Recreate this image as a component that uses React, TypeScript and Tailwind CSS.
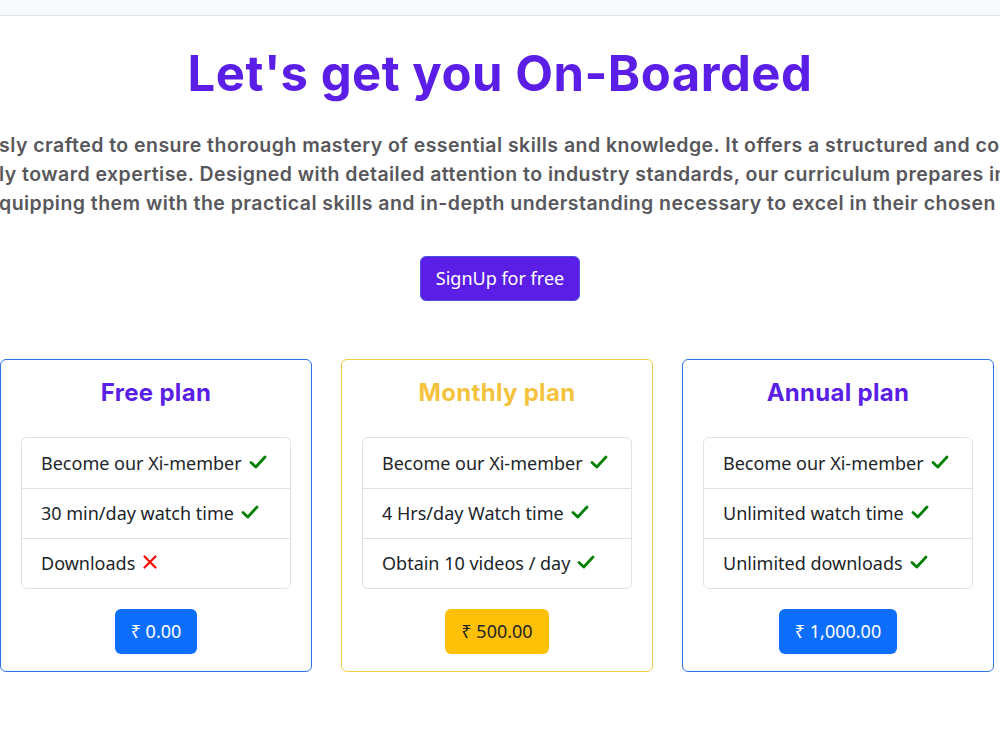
import React from "react";

type Feature = { label: string; ok: boolean };
type Plan = {
  name: string;
  price: string;
  titleColor: string;
  border: string;
  button: string;
  features: Feature[];
};

const plans: Plan[] = [
  {
    name: "Free plan",
    price: "₹ 0.00",
    titleColor: "text-[#5b1ee6]",
    border: "border-[#2f74e6]",
    button: "bg-[#0d6efd] text-white",
    features: [
      { label: "Become our Xi-member", ok: true },
      { label: "30 min/day watch time", ok: true },
      { label: "Downloads", ok: false },
    ],
  },
  {
    name: "Monthly plan",
    price: "₹ 500.00",
    titleColor: "text-[#f5c23e]",
    border: "border-[#f3cc4a]",
    button: "bg-[#ffc107] text-[#212529]",
    features: [
      { label: "Become our Xi-member", ok: true },
      { label: "4 Hrs/day Watch time", ok: true },
      { label: "Obtain 10 videos / day", ok: true },
    ],
  },
  {
    name: "Annual plan",
    price: "₹ 1,000.00",
    titleColor: "text-[#5b1ee6]",
    border: "border-[#2f74e6]",
    button: "bg-[#0d6efd] text-white",
    features: [
      { label: "Become our Xi-member", ok: true },
      { label: "Unlimited watch time", ok: true },
      { label: "Unlimited downloads", ok: true },
    ],
  },
];

function Tick() {
  return (
    <svg width="18" height="16" viewBox="0 0 18 16" className="inline-block ml-[7px] -mt-[3px]">
      <path d="M2 8.5 L6.8 13 L16 3" fill="none" stroke="#008000" strokeWidth="2.8" strokeLinecap="round" strokeLinejoin="round" />
    </svg>
  );
}

function Cross() {
  return (
    <svg width="16" height="16" viewBox="0 0 16 16" className="inline-block ml-[7px] -mt-[3px]">
      <path d="M2.5 2.5 L13.5 13.5 M13.5 2.5 L2.5 13.5" fill="none" stroke="#ff0000" strokeWidth="2.2" strokeLinecap="round" />
    </svg>
  );
}

function PlanCard({ plan }: { plan: Plan }) {
  return (
    <div className={`w-[312px] shrink-0 h-[313px] border ${plan.border} rounded-[6px] bg-white flex flex-col items-center px-[20px]`}>
      <h3
        className={`mt-[15px] h-[36px] leading-[36px] text-[24px] font-bold tracking-[0.3px] ${plan.titleColor}`}
        style={{ fontFamily: "Inter, 'Noto Sans', sans-serif" }}
      >
        {plan.name}
      </h3>
      <ul className="mt-[26px] w-full border border-[#dee2e6] rounded-[6px]">
        {plan.features.map((f, i) => (
          <li
            key={f.label}
            className={`h-[50px] flex items-center pl-[19px] text-[18px] text-[#212529] ${i > 0 ? "border-t border-[#dee2e6]" : ""}`}
          >
            <span>{f.label}</span>
            {f.ok ? <Tick /> : <Cross />}
          </li>
        ))}
      </ul>
      <button className={`mt-[20px] h-[45px] px-[16px] rounded-[6px] text-[18px] ${plan.button}`}>
        {plan.price}
      </button>
    </div>
  );
}

export default function App() {
  return (
    <div
      className="w-[1000px] h-[750px] overflow-hidden bg-white"
      style={{ fontFamily: "'Noto Sans', 'Open Sans', sans-serif" }}
    >
      <div className="h-[16px] bg-[#f8f9fa] border-b border-[#dee2e6]" />

      <h1
        className="mt-[28px] text-center text-[49px] leading-[60px] font-bold text-[#5b1ee6] tracking-[0.5px]"
        style={{ fontFamily: "Inter, 'Noto Sans', sans-serif" }}
      >
        Let's get you On-Boarded
      </h1>

      <div
        className="mt-[27px] text-[19.5px] leading-[29px] font-semibold text-[#58575c] whitespace-nowrap tracking-[0.46px]"
        style={{ fontFamily: "Inter, 'Noto Sans', sans-serif" }}
      >
        <p className="-ml-[1px]">sly crafted to ensure thorough mastery of essential skills and knowledge. It offers a structured and comprehensive</p>
        <p className="-ml-[1px]">ly toward expertise. Designed with detailed attention to industry standards, our curriculum prepares individuals</p>
        <p className="-ml-[1px]">quipping them with the practical skills and in-depth understanding necessary to excel in their chosen field.</p>
      </div>

      <div className="mt-[38px] flex justify-center">
        <button className="h-[45px] w-[160px] rounded-[6px] bg-[#5b1ee6] border border-[#4a4fe0] text-white text-[18px]">
          SignUp for free
        </button>
      </div>

      <div className="mt-[58px] flex gap-[29px]">
        {plans.map((p) => (
          <PlanCard key={p.name} plan={p} />
        ))}
      </div>
    </div>
  );
}
